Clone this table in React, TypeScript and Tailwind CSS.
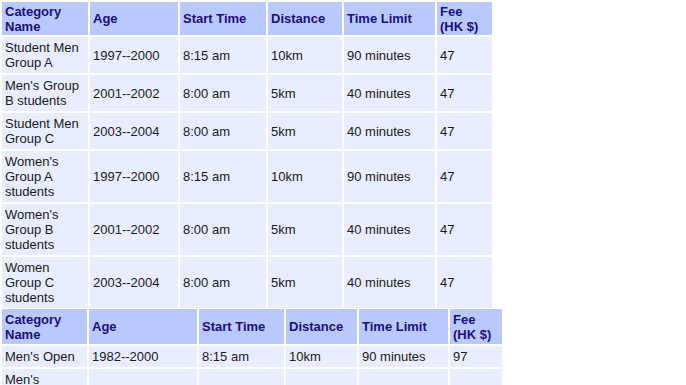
import React from "react";

type Row = [string, string, string, string, string, string];

const headers: Row = ["Category Name", "Age", "Start Time", "Distance", "Time Limit", "Fee (HK $)"];

const rows1: Row[] = [
  ["Student Men Group A", "1997--2000", "8:15 am", "10km", "90 minutes", "47"],
  ["Men's Group B students", "2001--2002", "8:00 am", "5km", "40 minutes", "47"],
  ["Student Men Group C", "2003--2004", "8:00 am", "5km", "40 minutes", "47"],
  ["Women's Group A students", "1997--2000", "8:15 am", "10km", "90 minutes", "47"],
  ["Women's Group B students", "2001--2002", "8:00 am", "5km", "40 minutes", "47"],
  ["Women Group C students", "2003--2004", "8:00 am", "5km", "40 minutes", "47"],
];

const rows2: Row[] = [
  ["Men's Open", "1982--2000", "8:15 am", "10km", "90 minutes", "97"],
  ["Men's Veterans Group A", "1972--1981", "8:15 am", "10km", "90 minutes", "97"],
  ["Men's Veterans Group B", "1971 and before", "8:15 am", "10km", "90 minutes", "97"],
];

function Table({
  widths,
  total,
  rows,
  tall,
  className,
}: {
  widths: number[];
  total: number;
  rows: Row[];
  tall?: boolean;
  className?: string;
}) {
  return (
    <table
      className={
        "table-fixed border-separate border-spacing-[2px] font-['Liberation_Sans',Arial,sans-serif] text-[13px] leading-[15px] " +
        (className ?? "")
      }
      style={{ width: total }}
    >
      <colgroup>
        {widths.map((w, i) => (
          <col key={i} style={{ width: w }} />
        ))}
      </colgroup>
      <thead>
        <tr>
          {headers.map((h, i) => (
            <th
              key={i}
              className={
                (tall ? "h-[35px] " : "h-[33px] ") +
                "bg-[#b9c9fe] px-[3px] py-[1px] text-left align-middle font-bold text-[#1c0f7c]"
              }
            >
              {h}
            </th>
          ))}
        </tr>
      </thead>
      <tbody>
        {rows.map((r, ri) => (
          <tr key={ri}>
            {r.map((c, ci) => (
              <td key={ci} className="bg-[#e8edff] px-[3px] py-[3px] align-middle text-[#1a1a1a]">
                {c}
              </td>
            ))}
          </tr>
        ))}
      </tbody>
    </table>
  );
}

export default function App() {
  return (
    <div className="bg-white">
      <Table widths={[86, 88, 86, 74, 91, 55]} total={494} rows={rows1} />
      <Table widths={[85, 108, 85, 71, 89, 52]} total={504} rows={rows2} tall className="-mt-[3px]" />
    </div>
  );
}
